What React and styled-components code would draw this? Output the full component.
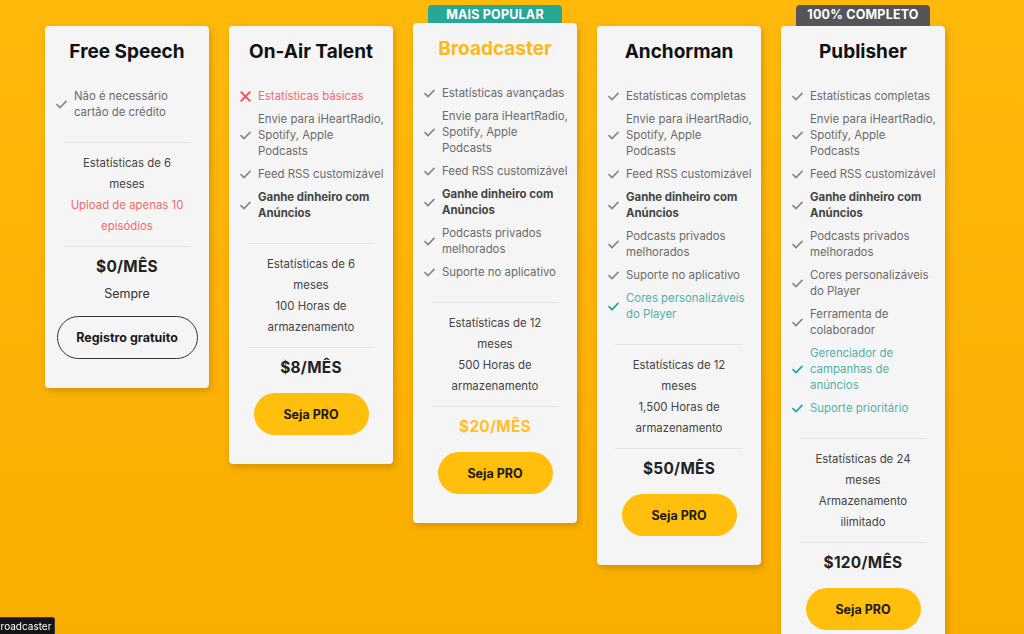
import React from "react";
import styled, { createGlobalStyle } from "styled-components";

const GlobalStyle = createGlobalStyle`
  html, body {
    margin: 0;
    padding: 0;
    overflow: hidden;
  }
  body {
    font-family: Inter, "Noto Sans", "Liberation Sans", sans-serif;
  }
`;

const plans = [
  {
    name: "Free Speech",
    features: [{ text: "Não é necessário cartão de crédito" }],
    details: [
      { text: "Estatísticas de 6 meses" },
      { text: "Upload de apenas 10 episódios", tone: "bad" },
    ],
    price: "$0/MÊS",
    note: "Sempre",
    cta: "Registro gratuito",
    free: true,
  },
  {
    name: "On-Air Talent",
    features: [
      { text: "Estatísticas básicas", tone: "bad" },
      { text: "Envie para iHeartRadio, Spotify, Apple Podcasts" },
      { text: "Feed RSS customizável" },
      { text: "Ganhe dinheiro com Anúncios", bold: true },
    ],
    details: [{ text: "Estatísticas de 6 meses" }, { text: "100 Horas de armazenamento" }],
    price: "$8/MÊS",
    cta: "Seja PRO",
  },
  {
    name: "Broadcaster",
    badge: "MAIS POPULAR",
    popular: true,
    features: [
      { text: "Estatísticas avançadas" },
      { text: "Envie para iHeartRadio, Spotify, Apple Podcasts" },
      { text: "Feed RSS customizável" },
      { text: "Ganhe dinheiro com Anúncios", bold: true },
      { text: "Podcasts privados melhorados" },
      { text: "Suporte no aplicativo" },
    ],
    details: [{ text: "Estatísticas de 12 meses" }, { text: "500 Horas de armazenamento" }],
    price: "$20/MÊS",
    cta: "Seja PRO",
  },
  {
    name: "Anchorman",
    features: [
      { text: "Estatísticas completas" },
      { text: "Envie para iHeartRadio, Spotify, Apple Podcasts" },
      { text: "Feed RSS customizável" },
      { text: "Ganhe dinheiro com Anúncios", bold: true },
      { text: "Podcasts privados melhorados" },
      { text: "Suporte no aplicativo" },
      { text: "Cores personalizáveis do Player", tone: "new" },
    ],
    details: [{ text: "Estatísticas de 12 meses" }, { text: "1,500 Horas de armazenamento" }],
    price: "$50/MÊS",
    cta: "Seja PRO",
  },
  {
    name: "Publisher",
    badge: "100% COMPLETO",
    features: [
      { text: "Estatísticas completas" },
      { text: "Envie para iHeartRadio, Spotify, Apple Podcasts" },
      { text: "Feed RSS customizável" },
      { text: "Ganhe dinheiro com Anúncios", bold: true },
      { text: "Podcasts privados melhorados" },
      { text: "Cores personalizáveis do Player" },
      { text: "Ferramenta de colaborador" },
      { text: "Gerenciador de campanhas de anúncios", tone: "new" },
      { text: "Suporte prioritário", tone: "new" },
    ],
    details: [{ text: "Estatísticas de 24 meses" }, { text: "Armazenamento ilimitado" }],
    price: "$120/MÊS",
    cta: "Seja PRO",
  },
];

const toneColor = {
  bad: "#f26a6a",
  new: "#4fb1ab",
};

const iconColor = {
  bad: "#f05050",
  new: "#26a69a",
};

function Check({ color }) {
  return (
    <svg width="11" height="9" viewBox="0 0 11 9" fill="none">
      <path d="M1 4.6 L4 7.6 L10 1.4" stroke={color} strokeWidth="1.7" strokeLinecap="round" strokeLinejoin="round" />
    </svg>
  );
}

function Cross({ color }) {
  return (
    <svg width="11" height="11" viewBox="0 0 11 11" fill="none">
      <path d="M1.2 1.2 L9.8 9.8 M9.8 1.2 L1.2 9.8" stroke={color} strokeWidth="1.9" strokeLinecap="round" />
    </svg>
  );
}

export default function App() {
  return (
    <>
      <GlobalStyle />
      <Page>
        <Plans>
          {plans.map((plan) => (
            <Card key={plan.name} $popular={plan.popular}>
              {plan.badge && (
                <Badge $popular={plan.popular}>{plan.badge}</Badge>
              )}
              <Title $popular={plan.popular}>{plan.name}</Title>
              <Features>
                {plan.features.map((f) => (
                  <Feature key={f.text} $tone={f.tone} $bold={f.bold}>
                    <IconBox>
                      {f.tone === "bad" ? (
                        <Cross color={iconColor.bad} />
                      ) : (
                        <Check color={iconColor[f.tone] || "#8a8a8a"} />
                      )}
                    </IconBox>
                    <span>{f.text}</span>
                  </Feature>
                ))}
              </Features>
              <Divider />
              <Details>
                {plan.details.map((d) => (
                  <Detail key={d.text} $tone={d.tone}>
                    {d.text}
                  </Detail>
                ))}
              </Details>
              <Divider />
              <Price $popular={plan.popular}>{plan.price}</Price>
              {plan.note && <Note>{plan.note}</Note>}
              <Button $free={plan.free}>{plan.cta}</Button>
            </Card>
          ))}
        </Plans>
      </Page>
      <StatusTip>
        <span>Broadcaster</span>
      </StatusTip>
    </>
  );
}

const Page = styled.div`
  min-height: 100vh;
  box-sizing: border-box;
  padding: 26px 0 0 45px;
  background: linear-gradient(180deg, #ffb90b 0%, #fbb105 60%, #f9ad00 100%);
`;

const Plans = styled.div`
  display: flex;
  align-items: flex-start;
  gap: 20px;
`;

const Card = styled.div`
  position: relative;
  width: 164px;
  box-sizing: border-box;
  padding: 14px 0 29px;
  margin-top: ${(p) => (p.$popular ? "-3px" : "0")};
  background: #f5f5f5;
  border-radius: 4px;
  box-shadow: 2px 3px 6px rgba(120, 70, 0, 0.28);
  display: flex;
  flex-direction: column;
  align-items: center;
`;

const Badge = styled.div`
  position: absolute;
  left: 15px;
  right: 15px;
  top: ${(p) => (p.$popular ? "-18px" : "-21px")};
  height: ${(p) => (p.$popular ? "18px" : "21px")};
  border-radius: 4px 4px 0 0;
  background: ${(p) => (p.$popular ? "#27a795" : "#555558")};
  color: #fff;
  font-size: 12.5px;
  font-weight: 700;
  line-height: 20px;
  text-align: center;
  letter-spacing: 0.2px;
`;

const Title = styled.h2`
  margin: 0;
  font-size: 19px;
  line-height: 24px;
  font-weight: 700;
  color: ${(p) => (p.$popular ? "#fdb913" : "#111")};
`;

const Features = styled.ul`
  list-style: none;
  margin: 24px 0 0;
  padding: 0 8px 0 11px;
  align-self: stretch;
  display: flex;
  flex-direction: column;
  gap: 7px;
`;

const Feature = styled.li`
  display: flex;
  align-items: center;
  gap: 7px;
  font-size: 11.4px;
  line-height: 16px;
  color: ${(p) => toneColor[p.$tone] || (p.$bold ? "#444" : "#6a6a6a")};
  font-weight: ${(p) => (p.$bold ? 700 : 400)};
`;

const IconBox = styled.span`
  flex: 0 0 11px;
  display: flex;
  align-items: center;
  justify-content: center;
`;

const Divider = styled.hr`
  align-self: stretch;
  margin: 22px 18px 0;
  border: 0;
  border-top: 1px solid #e6e6e6;
`;

const Details = styled.div`
  margin: 10px 0 0;
  padding: 0 22px;
  align-self: stretch;
  text-align: center;
  & + ${Divider} {
    margin-top: 9px;
  }
`;

const Detail = styled.div`
  font-size: 11.4px;
  line-height: 21px;
  color: ${(p) => toneColor[p.$tone] || "#444"};
`;

const Price = styled.div`
  margin-top: 10px;
  font-size: 15.4px;
  line-height: 20px;
  font-weight: 700;
  letter-spacing: 0.3px;
  color: ${(p) => (p.$popular ? "#ffc02a" : "#222")};
`;

const Note = styled.div`
  margin: 6px 0 -3px;
  font-size: 12.5px;
  line-height: 21px;
  color: #333;
`;

const Button = styled.button`
  margin-top: 15px;
  width: ${(p) => (p.$free ? "141px" : "115px")};
  height: ${(p) => (p.$free ? "43px" : "42px")};
  border-radius: 22px;
  border: ${(p) => (p.$free ? "1.3px solid #333" : "0")};
  background: ${(p) => (p.$free ? "transparent" : "#ffbf0c")};
  color: #1a1a1a;
  font-family: inherit;
  font-size: 12.5px;
  font-weight: 700;
  cursor: pointer;
`;

const StatusTip = styled.div`
  position: fixed;
  left: 0;
  bottom: 0;
  height: 17px;
  padding-right: 3px;
  overflow: hidden;
  background: #151515;
  border: 1px solid #3a3a3a;
  border-left: 0;
  border-bottom: 0;
  border-top-right-radius: 3px;
  box-sizing: border-box;
  color: #fff;
  font-size: 10px;
  line-height: 16px;
  white-space: nowrap;

  span {
    display: block;
    margin-left: -6px;
  }
`;
